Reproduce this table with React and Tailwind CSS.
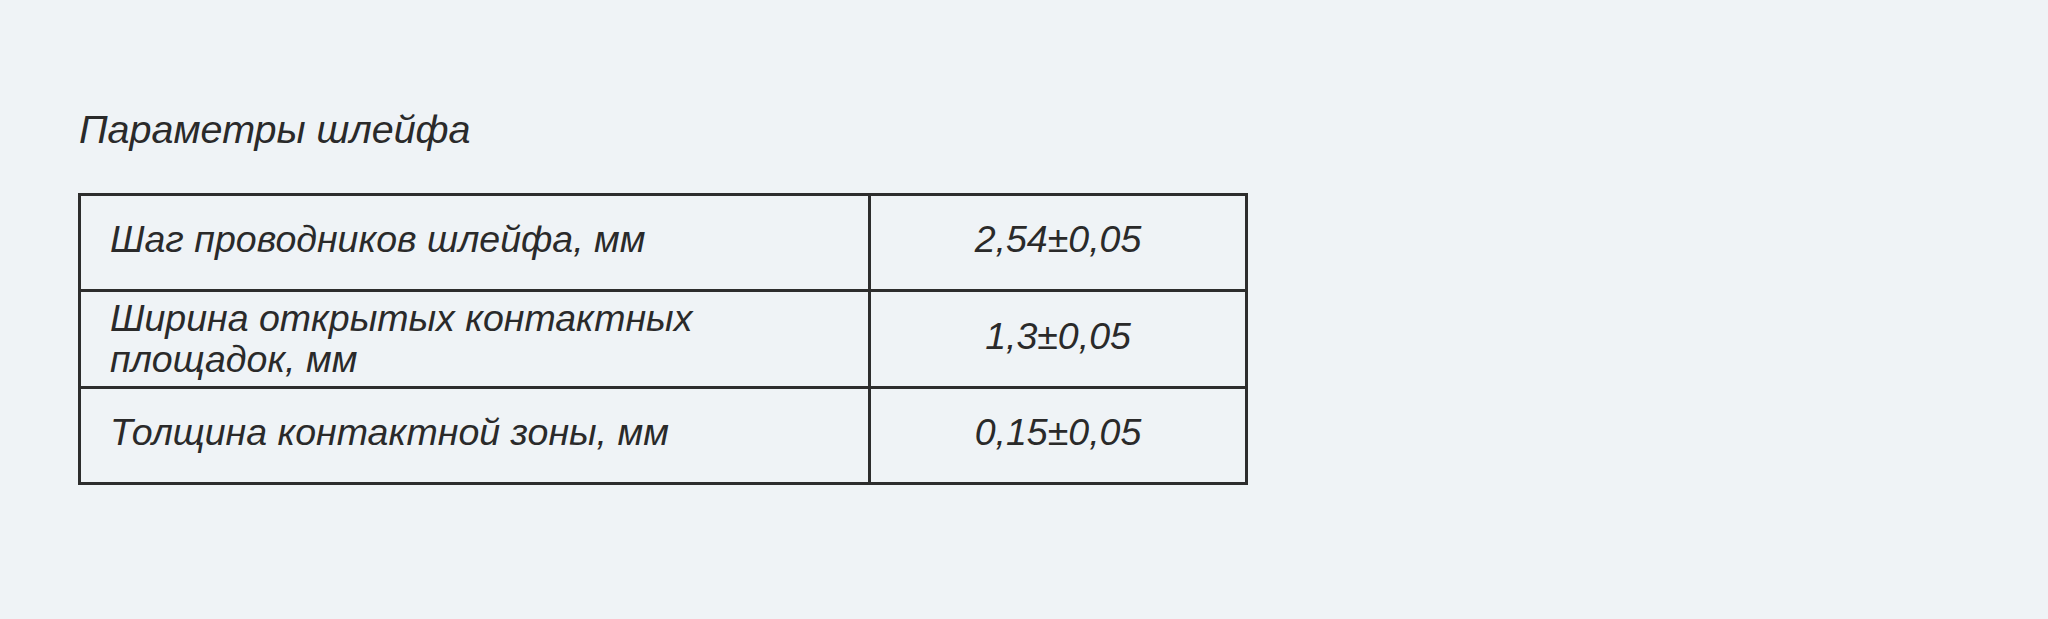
import React from "react";

const rows = [
  { label: ["Шаг проводников шлейфа, мм"], value: "2,54±0,05", h: "h-[96px]", pb: "pb-[6px]" },
  { label: ["Ширина открытых контактных", "площадок, мм"], value: "1,3±0,05", h: "h-[97px]", pb: "pb-[1px]" },
  { label: ["Толщина контактной зоны, мм"], value: "0,15±0,05", h: "h-[93px]", pb: "pb-[6px]" },
];

export default function App() {
  return (
    <div
      className="w-[2048px] h-[619px] bg-[#eff3f6] pl-[78px] pt-[108px] text-[#2a2a2a] italic"
      style={{ fontFamily: '"Liberation Sans", Arial, sans-serif' }}
    >
      <div className="text-[39.5px] leading-[42px] pl-[1px]">Параметры шлейфа</div>
      <div className="mt-[43px] w-[1170px] border-[3px] border-[#2d2d2d] flex flex-col">
        {rows.map((r, i) => (
          <div
            key={i}
            className={`flex ${r.h} ${i < rows.length - 1 ? "border-b-[3px] border-[#2d2d2d]" : ""}`}
          >
            <div className={`w-[787px] flex flex-col justify-center pl-[29px] ${r.pb} text-[37.5px] leading-[41px]`}>
              {r.label.map((l, j) => (
                <div key={j}>{l}</div>
              ))}
            </div>
            <div className="flex-1 border-l-[3px] border-[#2d2d2d] flex items-center justify-center pb-[6px] text-[37.5px] leading-[41px]">
              {r.value}
            </div>
          </div>
        ))}
      </div>
    </div>
  );
}
